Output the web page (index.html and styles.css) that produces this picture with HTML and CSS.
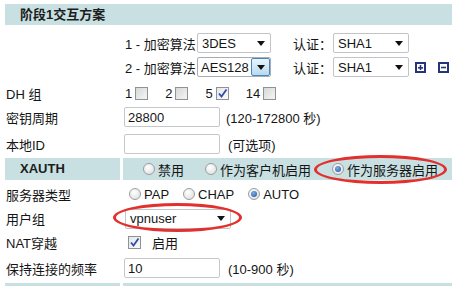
FILE: index.html
```html
<!DOCTYPE html>
<html lang="zh-CN">
<head>
    <meta charset="UTF-8">
    <title>阶段1交互方案</title>
    <link rel="stylesheet" href="styles.css">
</head>
<body>
    <div class="panel">
        <div class="title">阶段1交互方案</div>

        <div class="row">
            <div class="label"></div>
            <div class="field">
                <span class="algo-label">1 - 加密算法</span>
                <div class="select algo"><span>3DES</span><i class="arrow"></i></div>
                <span class="auth">认证：</span>
                <div class="select hash"><span>SHA1</span><i class="arrow"></i></div>
            </div>
        </div>
        <div class="row">
            <div class="label"></div>
            <div class="field">
                <span class="algo-label">2 - 加密算法</span>
                <div class="select algo focus"><span>AES128</span><b class="btn"><i class="arrow"></i></b></div>
                <span class="auth">认证：</span>
                <div class="select hash"><span>SHA1</span><i class="arrow"></i></div>
                <svg class="icon add" width="11" height="11" viewBox="0 0 11 11">
                    <rect width="11" height="11" fill="#26357a"/>
                    <rect x="2" y="2" width="7" height="7" fill="#fff"/>
                    <rect x="3" y="5" width="5" height="1.6" fill="#26357a"/>
                    <rect x="4.7" y="3" width="1.6" height="5" fill="#26357a"/>
                </svg>
                <svg class="icon del" width="11" height="11" viewBox="0 0 11 11">
                    <rect width="11" height="11" fill="#26357a"/>
                    <rect x="2" y="2" width="7" height="7" fill="#fff"/>
                    <rect x="3" y="4.7" width="5" height="1.6" fill="#26357a"/>
                </svg>
            </div>
        </div>

        <div class="row sp2">
            <div class="label">DH 组</div>
            <div class="field">
                <span class="dh">1<span class="check"></span></span>
                <span class="dh">2<span class="check"></span></span>
                <span class="dh">5<span class="check on"><svg width="11" height="11" viewBox="0 0 11 11"><path d="M2 5.5 L4.5 8.5 L9.5 1.5" fill="none" stroke="#2f4ea6" stroke-width="1.8"/></svg></span></span>
                <span class="dh">14<span class="check"></span></span>
            </div>
        </div>

        <div class="row">
            <div class="label">密钥周期</div>
            <div class="field">
                <input class="text" type="text" value="28800">
                <span class="hint">(120-172800 秒)</span>
            </div>
        </div>
        <div class="row sp3">
            <div class="label">本地ID</div>
            <div class="field">
                <input class="text" type="text" value="">
                <span class="hint wide">(可选项)</span>
            </div>
        </div>

        <div class="row xauth sp2">
            <div class="cell-left">XAUTH</div>
            <div class="cell-right">
                <span class="opt"><span class="radio"></span>禁用</span>
                <span class="opt"><span class="radio"></span>作为客户机启用</span>
                <span class="opt"><span class="radio on"></span>作为服务器启用</span>
            </div>
        </div>

        <div class="row sp2">
            <div class="label">服务器类型</div>
            <div class="field types">
                <span class="opt"><span class="radio"></span>PAP</span>
                <span class="opt"><span class="radio"></span>CHAP</span>
                <span class="opt"><span class="radio on"></span>AUTO</span>
            </div>
        </div>
        <div class="row">
            <div class="label">用户组</div>
            <div class="field">
                <div class="select group"><span>vpnuser</span><i class="arrow"></i></div>
            </div>
        </div>
        <div class="row">
            <div class="label">NAT穿越</div>
            <div class="field">
                <span class="check on nat"><svg width="11" height="11" viewBox="0 0 11 11"><path d="M2 5.5 L4.5 8.5 L9.5 1.5" fill="none" stroke="#2f4ea6" stroke-width="1.8"/></svg></span>
                <span>启用</span>
            </div>
        </div>
        <div class="row sp2">
            <div class="label">保持连接的频率</div>
            <div class="field">
                <input class="text" type="text" value="10">
                <span class="hint wide">(10-900 秒)</span>
            </div>
        </div>

        <div class="row bar">
            <div class="cell-left"></div>
            <div class="cell-right"></div>
        </div>

        <!-- marcas rojas encima -->
        <div class="mark mark-server"></div>
        <div class="mark mark-group"></div>
    </div>
</body>
</html>
```

FILE: styles.css
```css
body {
    margin: 0;
    font-family: "Liberation Sans", "Noto Sans CJK SC", sans-serif;
    font-size: 13px;
    color: #151515;
    background-color: #ffffff;
    overflow: hidden;
}

.panel {
    position: relative;
    margin-left: 5px;
    padding-top: 4px;
}

.title {
    height: 21px;
    line-height: 21px;
    padding-left: 15px;
    margin-bottom: 6px;
    background-color: #c8e0e1;
    font-weight: bold;
    color: #1d1d1d;
}

.row {
    display: flex;
    align-items: center;
    height: 24px;
}

.sp2 {
    margin-top: 2px;
}

.sp3 {
    margin-top: 3px;
}

.label {
    flex-shrink: 0;
    width: 118px;
    padding-left: 1px;
    white-space: nowrap;
}

.field {
    display: flex;
    align-items: center;
    white-space: nowrap;
}

.algo-label {
    width: 69px;
    text-align: right;
    margin-left: 1px;
    margin-right: 3px;
}

.auth {
    margin-left: 22px;
    width: 40px;
}

/* selects dibujados a mano */
.select {
    display: flex;
    align-items: center;
    flex-shrink: 0;
    height: 20px;
    box-sizing: border-box;
    border: 1px solid #c2c4c6;
    border-radius: 2px;
    padding-left: 4px;
    background-color: #ffffff;
    overflow: hidden;
}

.select .arrow {
    margin-left: auto;
    margin-right: 5px;
    width: 0;
    height: 0;
    border-left: 4px solid transparent;
    border-right: 4px solid transparent;
    border-top: 5px solid #111;
}

.select.algo {
    width: 74px;
}

.select.hash {
    width: 76px;
}

.select.group {
    width: 106px;
    margin-left: 1px;
    margin-top: 1px;
}

.select.focus {
    padding-left: 3px;
    border-color: #a9adb2;
}

.select .btn {
    flex-shrink: 0;
    margin-left: auto;
    display: flex;
    align-items: center;
    justify-content: center;
    width: 19px;
    height: 18px;
    box-sizing: border-box;
    border: 1px solid #4a86b8;
    border-radius: 2px;
    background: linear-gradient(#e8f4fc, #b9daf1);
}

.select .btn .arrow {
    margin: 0;
}

.icon {
    display: block;
    flex-shrink: 0;
}

.icon.add {
    margin-left: 6px;
}

.icon.del {
    margin-left: 12px;
}

/* casillas */
.dh {
    display: flex;
    align-items: center;
    margin-left: 1px;
    margin-right: 16px;
}

.check {
    display: flex;
    align-items: center;
    justify-content: center;
    flex-shrink: 0;
    width: 13px;
    height: 13px;
    box-sizing: border-box;
    margin-left: 3px;
    border: 1px solid #8f9193;
    background: linear-gradient(135deg, #d6d7d8, #f6f6f6);
}

.check.on {
    background: linear-gradient(135deg, #e4e6ea, #fbfbfb);
}

.check.nat {
    margin-left: 4px;
    margin-right: 11px;
}

.text {
    flex-shrink: 0;
    width: 96px;
    height: 20px;
    box-sizing: border-box;
    margin: 0;
    padding: 0 3px;
    border: 1px solid #c5c7c9;
    border-radius: 2px;
    font: inherit;
    color: #151515;
    outline: none;
}

.hint {
    margin-left: 6px;
}

.hint.wide {
    margin-left: 8px;
}

/* fila XAUTH */
.xauth {
    height: 22px;
}

.cell-left {
    flex-shrink: 0;
    width: 115px;
    height: 100%;
    box-sizing: border-box;
    padding-left: 15px;
    line-height: 22px;
    margin-right: 3px;
    background-color: #c8e0e1;
    font-weight: bold;
    color: #1d1d1d;
}

.cell-right {
    flex: 1;
    height: 100%;
    display: flex;
    align-items: center;
    padding-left: 20px;
    white-space: nowrap;
    background-color: #c8e0e1;
}

.cell-right .opt {
    margin-right: 21px;
}

.opt {
    display: flex;
    align-items: center;
    flex-shrink: 0;
    white-space: nowrap;
}

.types {
    margin-left: 5px;
}

.types .opt {
    margin-right: 14px;
}

.radio {
    position: relative;
    flex-shrink: 0;
    width: 12px;
    height: 12px;
    box-sizing: border-box;
    margin-right: 3px;
    border: 1px solid #9b9d9f;
    border-radius: 50%;
    background: radial-gradient(circle at 40% 35%, #ffffff, #d9dadb);
}

.radio.on::after {
    content: "";
    position: absolute;
    left: 2px;
    top: 2px;
    width: 6px;
    height: 6px;
    border-radius: 50%;
    background: radial-gradient(circle at 40% 35%, #7fb0e6, #1d4f9c);
}

.bar {
    height: 6px;
    margin-top: 3px;
}

/* ovalos rojos encima del formulario */
.mark {
    position: absolute;
    box-sizing: border-box;
    border: 3px solid #e2302f;
    border-radius: 50%;
}

.mark-server {
    left: 309px;
    top: 155px;
    width: 133px;
    height: 29px;
}

.mark-group {
    left: 108px;
    top: 203px;
    width: 129px;
    height: 29px;
}
```
